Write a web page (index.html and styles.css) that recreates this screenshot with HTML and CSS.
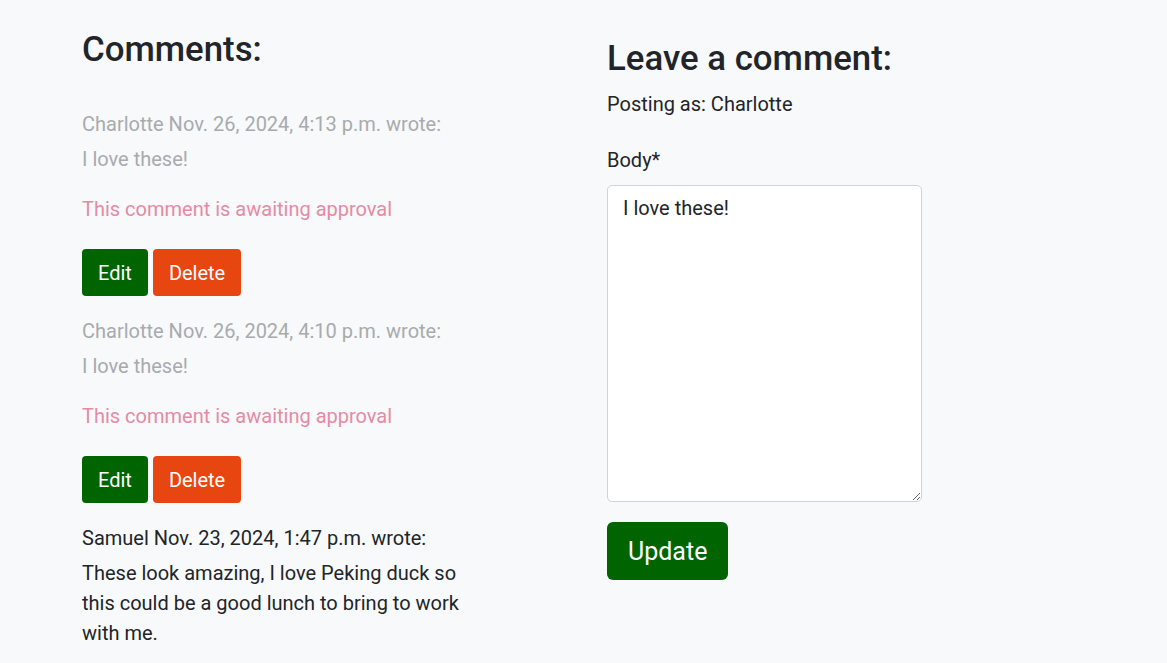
FILE: index.html
```html
<!DOCTYPE html>
<html lang="en">
<head>
<meta charset="utf-8">
<title>Comments</title>
<link rel="stylesheet" href="styles.css">
</head>
<body>
<main class="page">
  <section class="comments">
    <h2 class="heading">Comments:</h2>
    <div class="comment faded">
      <p class="meta">Charlotte Nov. 26, 2024, 4:13 p.m. wrote:</p>
      <p class="body">I love these!</p>
      <p class="approval">This comment is awaiting approval</p>
      <div class="actions">
        <button class="btn btn-edit">Edit</button>
        <button class="btn btn-delete">Delete</button>
      </div>
    </div>
    <div class="comment faded">
      <p class="meta">Charlotte Nov. 26, 2024, 4:10 p.m. wrote:</p>
      <p class="body">I love these!</p>
      <p class="approval">This comment is awaiting approval</p>
      <div class="actions">
        <button class="btn btn-edit">Edit</button>
        <button class="btn btn-delete">Delete</button>
      </div>
    </div>
    <div class="comment">
      <p class="meta">Samuel Nov. 23, 2024, 1:47 p.m. wrote:</p>
      <p class="body">These look amazing, I love Peking duck so this could be a good lunch to bring to work with me.</p>
    </div>
  </section>
  <section class="form-col">
    <h2 class="heading heading-form">Leave a comment:</h2>
    <p class="posting">Posting as: Charlotte</p>
    <form class="comment-form">
      <label class="label" for="body">Body*</label>
      <textarea id="body" class="textarea">I love these!</textarea>
      <button type="button" class="btn btn-update">Update</button>
    </form>
  </section>
</main>
</body>
</html>
```
FILE: styles.css
```css
* { box-sizing: border-box; }
html, body { margin: 0; padding: 0; }
body {
  background: #f8f9fa;
  color: #212529;
  font-family: Roboto, "Liberation Sans", sans-serif;
  font-size: 20px;
  line-height: 30px;
}
.page {
  width: 1003px;
  margin: 0 auto;
  display: grid;
  grid-template-columns: 525px 1fr;
}
.comments { width: 395px; padding-top: 28px; }
.heading {
  margin: 0;
  font-size: 34.8px;
  font-weight: 500;
  line-height: 42px;
}
.comments .heading { margin-bottom: 39px; }
.heading-form { margin-top: 37px; margin-bottom: 10px; }
p { margin: 0; }
.meta { margin-bottom: 5px; }
.body { margin-bottom: 20px; }
.faded .meta, .faded .body { color: #a7abae; }
.approval { color: #e58ba4; margin-bottom: 25px; }
.actions { display: flex; gap: 5px; margin-bottom: 20px; }
.btn {
  font-family: inherit;
  border: 1px solid transparent;
  color: #fff;
  cursor: pointer;
}
.btn-edit, .btn-delete {
  font-size: 20px;
  line-height: 30px;
  padding: 7.5px 15px;
  border-radius: 4px;
}
.btn-edit { background: #006400; }
.btn-delete { background: #e84611; }
.posting { margin-bottom: 26px; }
.comment-form { display: flex; flex-direction: column; align-items: flex-start; }
.label { display: block; margin-bottom: 10px; }
.textarea {
  width: 315px;
  height: 317px;
  border: 1px solid #ced4da;
  border-radius: 5px;
  background: #fff;
  color: #212529;
  font-family: inherit;
  font-size: 20px;
  line-height: 30px;
  padding: 7px 15px;
  margin: 0 0 20px 0;
  resize: both;
}
.btn-update {
  background: #006400;
  font-size: 25px;
  line-height: 36px;
  padding: 11px 20px 9px;
  border-radius: 6px;
}
```
